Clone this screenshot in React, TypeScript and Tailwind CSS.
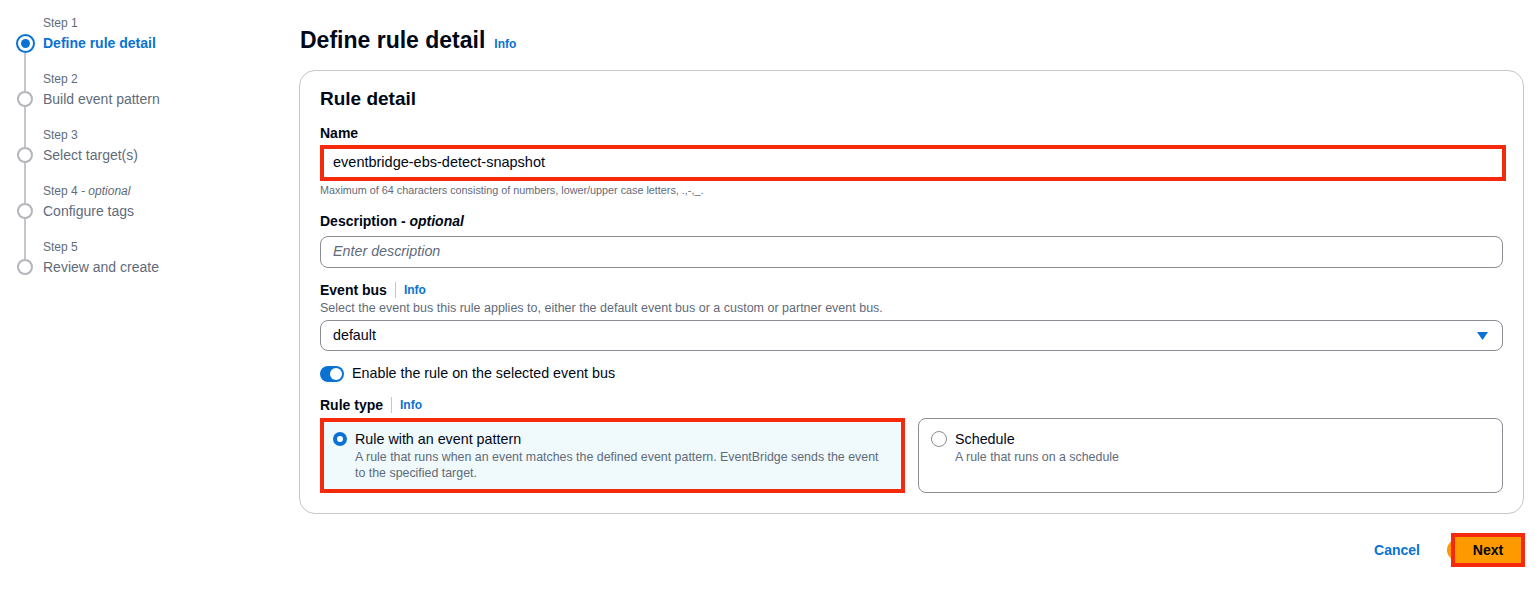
const steps = [
  { label: "Step 1", title: "Define rule detail", active: true },
  { label: "Step 2", title: "Build event pattern" },
  { label: "Step 3", title: "Select target(s)" },
  { label: "Step 4", optional: true, title: "Configure tags" },
  { label: "Step 5", title: "Review and create" },
];

const Stepper = () => {
  return (
    <nav className="w-[299px] shrink-0 pl-[15px] pt-[15px]">
      {steps.map((s, i) => (
        <div key={s.label} className="flex h-[56px]">
          <div className="flex w-[20px] flex-col items-center">
            <div className={`w-[2px] ${s.active ? "h-[19px]" : "h-[20px]"} ${i === 0 ? "" : "bg-[#c6c6cd]"}`} />
            {s.active ? (
              <div className="flex h-[19px] w-[19px] items-center justify-center rounded-full border-[2.5px] border-[#0972d3]">
                <div className="h-[9px] w-[9px] rounded-full bg-[#0972d3]" />
              </div>
            ) : (
              <div className="h-[16px] w-[16px] rounded-full border-2 border-[#b4b4bb]" />
            )}
            {i < steps.length - 1 && <div className="w-[2px] flex-1 bg-[#c6c6cd]" />}
          </div>
          <div className="pl-[8px]">
            <div className="text-[12px] leading-[16px] text-[#5f6b7a]">
              {s.label}
              {s.optional && <span className="italic"> - optional</span>}
            </div>
            <div
              className={`text-[14px] leading-[24px] ${
                s.active ? "font-bold text-[#0972d3]" : "text-[#5f6b7a]"
              }`}
            >
              {s.title}
            </div>
          </div>
        </div>
      ))}
    </nav>
  );
};

const Info = () => <span className="text-[12px] font-bold text-[#0972d3]">Info</span>;

const LabelWithInfo = ({ text }: { text: string }) => (
  <div className="flex h-[20px] items-center">
    <span className="text-[14px] font-bold text-[#000716]">{text}</span>
    <span className="mx-[8px] h-[16px] w-px bg-[#c6c6cd]" />
    <Info />
  </div>
);

export default function App() {
  return (
    <div
      className="flex h-[594px] w-[1540px] bg-white text-[#000716]"
      style={{ fontFamily: '"Liberation Sans", Arial, sans-serif' }}
    >
      <Stepper />

      <main className="flex flex-1 flex-col pr-[16px] pt-[25px]">
        <div className="flex h-[30px] items-center">
          <h1 className="ml-px text-[23px] font-bold leading-[30px]">Define rule detail</h1>
          <span className="ml-[9px] mt-[6px]">
            <Info />
          </span>
        </div>

        <section className="mt-[15px] rounded-[16px] border border-[#c6c6cd] px-[20px] pb-[20px] pt-[16px]">
          <h2 className="text-[19px] font-bold leading-[24px]">Rule detail</h2>

          <div className="mt-[12px] text-[14px] font-bold leading-[20px]">Name</div>
          <div className="-mr-[3px] mt-[2px] flex h-[36px] items-center border-[4px] border-[#f52a0c] bg-white pl-[9px] text-[14.5px]">
            eventbridge-ebs-detect-snapshot
          </div>
          <div className="mt-px text-[10.8px] leading-[16px] text-[#5f6b7a]">
            Maximum of 64 characters consisting of numbers, lower/upper case letters, .,-,_.
          </div>

          <div className="mt-[13px] text-[14px] font-bold leading-[20px]">
            Description - <span className="italic">optional</span>
          </div>
          <div className="mt-[5px] flex h-[32px] items-center rounded-[8px] border border-[#8c8c94] pl-[12px] text-[14.3px] italic text-[#5f6b7a]">
            Enter description
          </div>

          <div className="mt-[12px]">
            <LabelWithInfo text="Event bus" />
          </div>
          <div className="text-[12.5px] leading-[16px] text-[#5f6b7a]">
            Select the event bus this rule applies to, either the default event bus or a custom or partner event bus.
          </div>
          <div className="mt-[4px] flex h-[31px] items-center justify-between rounded-[8px] border border-[#8c8c94] pl-[12px] pr-[14px] text-[14.3px]">
            <span>default</span>
            <svg width="11" height="8" viewBox="0 0 11 8">
              <path d="M0 0h11L5.5 8z" fill="#0972d3" />
            </svg>
          </div>

          <div className="mt-[13px] flex h-[20px] items-center gap-[8px]">
            <div className="flex h-[16px] w-[24px] items-center justify-end rounded-full bg-[#0972d3] pr-[2px]">
              <div className="h-[12px] w-[12px] rounded-full bg-white" />
            </div>
            <span className="text-[14.3px]">Enable the rule on the selected event bus</span>
          </div>

          <div className="mt-[11px]">
            <LabelWithInfo text="Rule type" />
          </div>

          <div className="mt-[3px] grid grid-cols-2 gap-[13px]">
            <div className="h-[75px] border-[4px] border-[#f52a0c] bg-[#f0f9fc] pl-[9px] pr-[14px] pt-[7px]">
              <div className="flex gap-[8px]">
                <div className="mt-[3px] h-[14px] w-[14px] shrink-0 rounded-full border-[4px] border-[#0972d3] bg-white" />
                <div>
                  <div className="text-[14.3px] leading-[20px]">Rule with an event pattern</div>
                  <div className="text-[12.4px] leading-[16px] text-[#5f6b7a]">
                    A rule that runs when an event matches the defined event pattern. EventBridge sends the event to the specified target.
                  </div>
                </div>
              </div>
            </div>
            <div className="h-[75px] rounded-[8px] border border-[#8c8c94] pl-[12px] pt-[10px]">
              <div className="flex gap-[8px]">
                <div className="mt-[2px] h-[16px] w-[16px] shrink-0 rounded-full border border-[#8c8c94] bg-white" />
                <div>
                  <div className="text-[14.3px] leading-[20px]">Schedule</div>
                  <div className="text-[12.4px] leading-[16px] text-[#5f6b7a]">A rule that runs on a schedule</div>
                </div>
              </div>
            </div>
          </div>
        </section>

        <div className="mt-[19px] flex items-center justify-end gap-[31px]">
          <span className="text-[14px] font-bold text-[#0972d3]">Cancel</span>
          <div className="relative">
            <span className="absolute -left-[4px] top-[6px] h-[22px] w-[12px] rounded-l-full bg-[#ff9900]" />
            <button className="relative -mr-[1px] flex h-[34px] w-[74px] items-center justify-center border-[4px] border-[#f52a0c] bg-[#ff9900] text-[14px] font-bold text-[#000716]">
              Next
            </button>
          </div>
        </div>
      </main>
    </div>
  );
}
